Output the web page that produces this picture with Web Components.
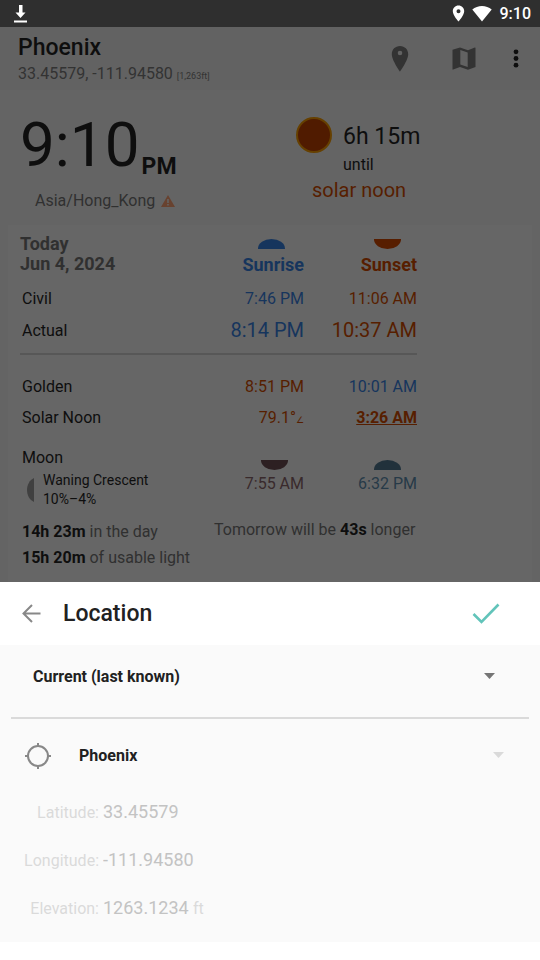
<!DOCTYPE html>
<html lang="en">
<head>
<meta charset="utf-8">
<meta name="viewport" content="width=device-width, initial-scale=1">
<title>Phoenix – Location</title>
<style>
html, body { margin: 0; min-height: 100%; }
body { font-family: Roboto, "Liberation Sans", sans-serif; font-size: 16px; background: #fff; color: #0e0e0e;
  --blue: #16355d; --orange: #571e00; --muted: #303030; }
</style>
</head>
<body>
<sun-app></sun-app>
<script>
const define = (name, html, setup) => customElements.define(name, class extends HTMLElement {
  constructor() {
    super();
    const t = document.createElement('template');
    t.innerHTML = '<style>*{box-sizing:border-box}svg{display:block;flex:none}button{border:0;padding:0;background:none;font:inherit;color:inherit;display:block}</style>' + html;
    this.attachShadow({ mode: 'open' }).append(t.content.cloneNode(true));
  }
  connectedCallback() { if (setup) setup(this, this.shadowRoot); }
});

define('status-bar', `
<style>
:host { display: flex; align-items: center; height: 27px; padding: 0 9px 0 13px; background: #2f2f2f; color: #fff; font-weight: 500; }
.right { margin-left: auto; display: flex; align-items: center; }
.wifi { margin: 0 8px 0 7px; }
</style>
<svg width="15" height="18" viewBox="0 0 15 18" fill="#fff"><path d="M6 0h3.500v7.500h3L7.500 13 2.500 7.500H6zM1 15.500h13v2H1z"/></svg>
<div class="right">
<svg width="13" height="17" viewBox="0 0 13 17"><path fill="#fff" fill-rule="evenodd" d="M6.500.5C3.200.5.8 3 .8 6.200c0 4 5.700 10.300 5.700 10.300s5.700-6.300 5.700-10.300C12.200 3 9.800.5 6.500.5zm0 3.700a2 2 0 1 1 0 4 2 2 0 0 1 0-4z"/></svg>
<svg class="wifi" width="20" height="17" viewBox="0 0 20 17"><path fill="#fff" d="M.3 4.500C5.500-.2 14.500-.2 19.700 4.500L10 16.500z"/></svg>
<span>9:10</span>
</div>`);

define('app-header', `
<style>
:host { display: flex; align-items: center; height: 63px; padding: 0 21px 0 18px; background: #626262; }
.name { padding-top: 4px; font-size: 23px; line-height: 28px; font-weight: 500; }
.pos { line-height: 24px; color: #333; }
small { font-size: 9px; }
.actions { margin-left: auto; display: flex; align-items: center; }
.map { margin: 0 37px 0 43px; }
</style>
<div><div class="name"><slot name="name"></slot></div><div class="pos"><slot name="pos"></slot> <small><slot name="elevation"></slot></small></div></div>
<div class="actions">
<button aria-label="Location"><svg width="18" height="26" viewBox="0 0 18 26"><path fill="#333" fill-rule="evenodd" d="M9 0C4.200 0 .8 3.600.8 8.200.8 14.200 9 25.500 9 25.500s8.200-11.300 8.200-17.300C17.200 3.600 13.800 0 9 0zm0 4.700a2.300 2.300 0 1 1 0 4.600 2.300 2.300 0 0 1 0-4.600z"/></svg></button>
<button class="map" aria-label="Map"><svg width="24" height="26" viewBox="0 1 24 26"><path fill="#333" fill-rule="evenodd" d="M.5 4.800 8 2.500l8 2.800L22.800 2.600q.7-.2.7.5V22L16 24.700 8 22 1.200 24.600q-.7.2-.7-.5zM8.300 5v14.500l7.400 2.600v-14.500z"/></svg></button>
<button aria-label="More options"><svg width="6" height="20" viewBox="0 0 6 20" fill="#0e0e0e"><circle cx="3" cy="2.800" r="2.400"/><circle cx="3" cy="9.500" r="2.400"/><circle cx="3" cy="16.200" r="2.400"/></svg></button>
</div>`);

define('clock-panel', `
<style>
:host { display: grid; grid-template-columns: 278fr 244fr; padding: 20px 0 12px 18px; background: #646464; }
.time { display: flex; align-items: flex-end; gap: 2px; padding: 1px 0 0 2px; }
.time b { font-size: 62px; line-height: 68px; font-weight: 400; }
.time span { font-size: 23px; line-height: 24px; font-weight: 700; }
.zone { display: flex; align-items: center; gap: 6px; margin: 10px 0 0 17px; line-height: 24px; color: var(--muted); }
.next { display: grid; grid-template-columns: 36px auto; column-gap: 11px; justify-content: start; align-content: start; padding-top: 7px; }
.left { padding-top: 2px; font-size: 23px; line-height: 36px; }
.until { grid-column: 2; line-height: 20px; }
.event { grid-column: 1 / 3; padding-left: 16px; font-size: 20px; line-height: 30px; color: var(--orange); }
</style>
<div>
<div class="time"><b>9:10</b><span>PM</span></div>
<div class="zone">Asia/Hong_Kong <svg width="14" height="12" viewBox="0 0 14 12"><path fill="#68422f" fill-rule="evenodd" d="M7 0l7 12H0zM6.200 4v4h1.600V4zm0 5v1.500h1.600V9z"/></svg></div>
</div>
<div class="next">
<svg width="36" height="36" viewBox="0 0 36 36"><circle cx="18" cy="18" r="17" fill="#501b00" stroke="#664000" stroke-width="2"/></svg>
<div class="left">6h 15m</div>
<div class="until">until</div>
<div class="event">solar noon</div>
</div>`);

define('half-disc', `
<style>
:host { display: block; width: 27px; height: 10px; margin-left: auto; margin-right: 16px; background: currentColor; border-radius: 14px 14px 0 0 / 10px 10px 0 0; }
:host([down]) { border-radius: 0 0 14px 14px / 0 0 10px 10px; }
</style>`);

define('day-card', `
<style>
:host { display: block; margin: 0 8px; padding: 0 115px 11px 12px; background: #666; }
table { width: 100%; border-collapse: collapse; }
th, td { padding: 0; font-weight: 400; text-align: right; line-height: 24px; }
th:first-child { text-align: left; padding-left: 2px; }
.c { width: 113px; }
thead tr { height: 57px; vertical-align: top; }
thead th { font-size: 18px; font-weight: 700; line-height: 20px; padding-top: 14px; }
thead th:first-child { padding: 9px 0 0; color: var(--muted); }
thead half-disc { margin-bottom: 6px; }
.civil { height: 33px; }
.actual { height: 39px; border-bottom: 2px solid #575757; }
.actual > * { padding-bottom: 6px; }
.actual td { font-size: 20px; padding-bottom: 8px; }
.golden { height: 48px; }
.golden > * { padding-top: 17px; }
.noon { height: 31px; }
.noon small { font-size: 9px; line-height: 12px; }
.moon { vertical-align: top; }
.moon th { padding-top: 13px; }
.moon td { padding-top: 27px; }
.moon half-disc { margin-bottom: 2px; }
.phase { display: flex; align-items: center; gap: 9px; padding: 1px 0 0 4px; font-size: 14px; line-height: 19px; }
.blue { color: var(--blue); }
.orange { color: var(--orange); }
.rise { color: #392a2c; }
.rise half-disc { color: #2d2022; }
.set { color: #273a48; }
.set half-disc { color: #21313b; }
.noon a { color: inherit; font-weight: 700; }
.stats { display: flex; gap: 24px; margin: 10px -8px 0 2px; line-height: 26px; color: var(--muted); white-space: nowrap; }
.stats b { color: #0e0e0e; }
.tomorrow { line-height: 22px; }
</style>
<table>
<thead><tr><th scope="col">Today<br>Jun 4, 2024</th><th scope="col" class="c blue"><half-disc style="margin-right:19px"></half-disc>Sunrise</th><th scope="col" class="c orange"><half-disc down></half-disc>Sunset</th></tr></thead>
<tbody>
<tr class="civil"><th scope="row">Civil</th><td class="blue">7:46 PM</td><td class="orange">11:06 AM</td></tr>
<tr class="actual"><th scope="row">Actual</th><td class="blue">8:14 PM</td><td class="orange">10:37 AM</td></tr>
<tr class="golden"><th scope="row">Golden</th><td class="orange">8:51 PM</td><td class="blue">10:01 AM</td></tr>
<tr class="noon"><th scope="row">Solar Noon</th><td class="orange">79.1°<small>∠</small></td><td class="orange"><a href="#noon">3:26 AM</a></td></tr>
<tr class="moon"><th scope="row">Moon
<div class="phase"><svg width="8" height="24" viewBox="0 0 8 24"><path fill="#404040" d="M8 0v24C3.500 22 1 17 1 12S3.500 2 8 0z"/></svg><div>Waning Crescent<br>10%–4%</div></div></th>
<td class="rise"><half-disc down></half-disc>7:55 AM</td><td class="set"><half-disc></half-disc>6:32 PM</td></tr>
</tbody>
</table>
<div class="stats"><div><b>14h 23m</b> in the day<br><b>15h 20m</b> of usable light</div><div class="tomorrow">Tomorrow will be <b>43s</b> longer</div></div>`);

define('sheet-header', `
<style>
:host { display: flex; align-items: center; height: 63px; padding: 0 40px 0 22px; background: #fff; }
h2 { margin: 0 auto 0 21px; font-size: 23px; line-height: 28px; font-weight: 500; }
</style>
<button aria-label="Back"><svg width="20" height="20" viewBox="0 0 20 20" fill="none" stroke="#888" stroke-width="2"><path d="M18.500 9.500H2M10 1 1.500 9.500 10 18"/></svg></button>
<h2><slot></slot></h2>
<button aria-label="Confirm"><svg width="28" height="22" viewBox="0 0 28 22" fill="none" stroke="#62c4ba" stroke-width="2.600"><path d="M1.500 11 9.500 19 26.500 1.500"/></svg></button>`);

define('spinner-select', `
<style>
:host { display: grid; align-items: center; flex: 1; }
select { grid-area: 1 / 1; width: 100%; height: 40px; appearance: none; border: 0; padding: 0; background: none; font: 700 16px/24px Roboto, "Liberation Sans", sans-serif; color: #212121; opacity: 1; }
svg { grid-area: 1 / 1; justify-self: end; pointer-events: none; fill: #757575; }
:host([locked]) svg { fill: #dadada; }
</style>
<select></select>
<svg width="11" height="8" viewBox="0 0 11 8"><path d="M0 0h11L5.500 6z"/></svg>`, (host, root) => {
  const select = root.querySelector('select');
  select.replaceChildren(new Option(host.getAttribute('value')));
  select.setAttribute('aria-label', host.getAttribute('label'));
  select.disabled = host.hasAttribute('locked');
});

define('coord-field', `
<style>
:host { display: flex; align-items: center; gap: 4px; height: 48px; color: #dadada; }
label { width: 75px; text-align: right; }
input { width: 120px; border: 0; padding: 0; background: none; font: 18px/24px Roboto, "Liberation Sans", sans-serif; color: #c3c3c3; }
:host([unit]) input { width: 86px; }
</style>
<label for="v"></label><input id="v" type="text" disabled><span></span>`, (host, root) => {
  root.querySelector('label').textContent = host.getAttribute('label') + ':';
  root.querySelector('input').value = host.getAttribute('value');
  root.querySelector('span').textContent = host.getAttribute('unit') || '';
});

define('location-sheet', `
<style>
:host { display: block; background: #fff; color: #212121; }
.body { background: #fafafa; padding-bottom: 10px; }
.mode { display: flex; align-items: center; height: 74px; margin: 0 11px; padding: 0 34px 8px 22px; border-bottom: 2px solid #dadada; }
.place { display: flex; align-items: center; gap: 27px; height: 69px; padding: 4px 36px 0 24px; }
.fields { padding-left: 24px; }
</style>
<sheet-header>Location</sheet-header>
<div class="body">
<div class="mode"><spinner-select label="Location mode" value="Current (last known)"></spinner-select></div>
<div class="place"><svg width="28" height="28" viewBox="0 0 28 28" fill="none" stroke="#888" stroke-width="2"><circle cx="14" cy="14" r="10"/><path d="M14 1v4M14 23v4M1 14h4M23 14h4"/></svg><spinner-select label="Place" value="Phoenix" locked></spinner-select></div>
<div class="fields">
<coord-field label="Latitude" value="33.45579"></coord-field>
<coord-field label="Longitude" value="-111.94580"></coord-field>
<coord-field label="Elevation" value="1263.1234" unit="ft"></coord-field>
</div>
</div>`);

define('sun-app', `
<style>
:host { display: block; }
main { background: #646464; }
</style>
<main>
<status-bar></status-bar>
<app-header><span slot="name">Phoenix</span><span slot="pos">33.45579, -111.94580</span><span slot="elevation">[1,263ft]</span></app-header>
<clock-panel></clock-panel>
<day-card></day-card>
</main>
<location-sheet></location-sheet>`);
</script>
</body>
</html>
